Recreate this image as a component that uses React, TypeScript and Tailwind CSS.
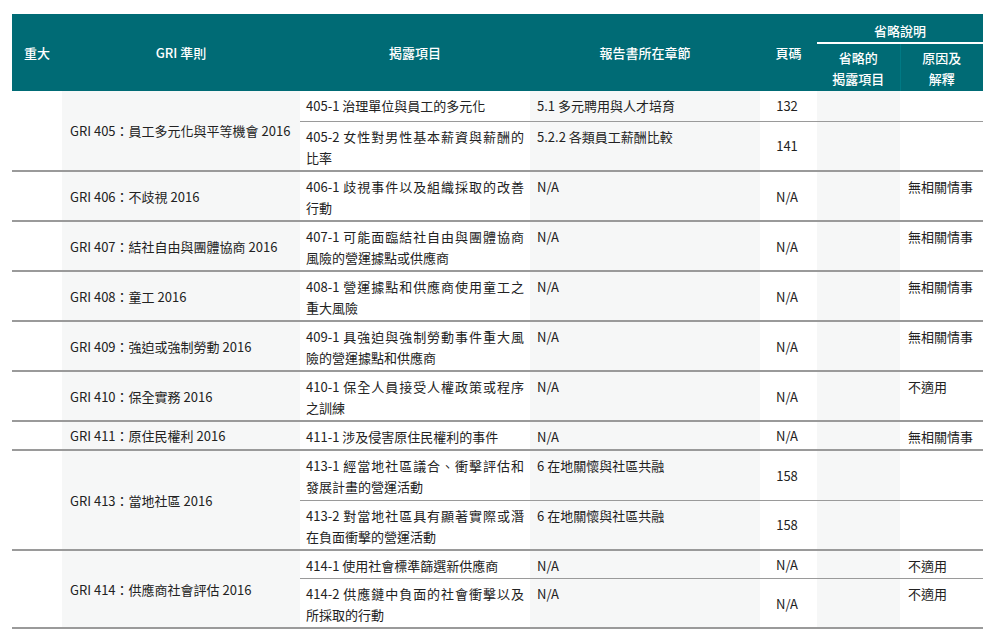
import React from "react";

type Sub = { d: string; s: string; p: string; o?: string };
type Row = { g: string; subs: Sub[]; h: number[] };

const rows: Row[] = [
  { g: "GRI 405：員工多元化與平等機會 2016", h: [30, 50], subs: [
    { d: "405-1 治理單位與員工的多元化", s: "5.1 多元聘用與人才培育", p: "132" },
    { d: "405-2 女性對男性基本薪資與薪酬的比率", s: "5.2.2 各類員工薪酬比較", p: "141" }] },
  { g: "GRI 406：不歧視 2016", h: [50], subs: [{ d: "406-1 歧視事件以及組織採取的改善行動", s: "N/A", p: "N/A", o: "無相關情事" }] },
  { g: "GRI 407：結社自由與團體協商 2016", h: [50], subs: [{ d: "407-1 可能面臨結社自由與團體協商風險的營運據點或供應商", s: "N/A", p: "N/A", o: "無相關情事" }] },
  { g: "GRI 408：童工 2016", h: [50], subs: [{ d: "408-1 營運據點和供應商使用童工之重大風險", s: "N/A", p: "N/A", o: "無相關情事" }] },
  { g: "GRI 409：強迫或強制勞動 2016", h: [50], subs: [{ d: "409-1 具強迫與強制勞動事件重大風險的營運據點和供應商", s: "N/A", p: "N/A", o: "無相關情事" }] },
  { g: "GRI 410：保全實務 2016", h: [49], subs: [{ d: "410-1 保全人員接受人權政策或程序之訓練", s: "N/A", p: "N/A", o: "不適用" }] },
  { g: "GRI 411：原住民權利 2016", h: [28], subs: [{ d: "411-1 涉及侵害原住民權利的事件", s: "N/A", p: "N/A", o: "無相關情事" }] },
  { g: "GRI 413：當地社區 2016", h: [50, 50], subs: [
    { d: "413-1 經當地社區議合、衝擊評估和發展計畫的營運活動", s: "6 在地關懷與社區共融", p: "158" },
    { d: "413-2 對當地社區具有顯著實際或潛在負面衝擊的營運活動", s: "6 在地關懷與社區共融", p: "158" }] },
  { g: "GRI 414：供應商社會評估 2016", h: [28, 49], subs: [
    { d: "414-1 使用社會標準篩選新供應商", s: "N/A", p: "N/A", o: "不適用" },
    { d: "414-2 供應鏈中負面的社會衝擊以及所採取的行動", s: "N/A", p: "N/A", o: "不適用" }] },
];

const shade = "bg-[#f6f7f7]";

export default function App() {
  return (
    <div className="bg-white w-[997px] h-[635px] pt-[14px] pl-[12px]" style={{ fontFamily: '"Noto Sans CJK TC", "Noto Sans", sans-serif' }}>
      <table className="border-collapse text-[13px] leading-[21px] text-[#222] table-fixed w-[971px]">
        <colgroup>
          <col className="w-[50px]" /><col className="w-[238px]" /><col className="w-[230px]" /><col className="w-[230px]" />
          <col className="w-[57px]" /><col className="w-[83px]" /><col className="w-[83px]" />
        </colgroup>
        <thead className="bg-[#006b75] text-white font-medium">
          <tr className="h-[29px]">
            <th rowSpan={2} className="text-left pl-[12px] font-medium align-middle">重大</th>
            <th rowSpan={2} className="font-medium">GRI 準則</th>
            <th rowSpan={2} className="font-medium">揭露項目</th>
            <th rowSpan={2} className="font-medium">報告書所在章節</th>
            <th rowSpan={2} className="font-medium">頁碼</th>
            <th colSpan={2} className="font-medium border-b-2 border-white pt-1">省略說明</th>
          </tr>
          <tr className="h-[48px]">
            <th className="font-medium border-r border-[#007a85]">省略的<br />揭露項目</th>
            <th className="font-medium">原因及<br />解釋</th>
          </tr>
        </thead>
        <tbody>
          {rows.map((r, i) =>
            r.subs.map((s, j) => (
              <tr key={i + "-" + j} style={{ height: r.h[j] }}
                className={j === r.subs.length - 1 ? "border-b-2 border-[#9a9a9a]" : ""}>
                {j === 0 && <td rowSpan={r.subs.length} className="bg-white" />}
                {j === 0 && <td rowSpan={r.subs.length} className={`${shade} pl-[8px] pr-[4px] align-middle text-justify`}>{r.g}</td>}
                <td className={`align-top px-[6px] pt-[4px] pb-[2px] text-justify ${j < r.subs.length - 1 ? "border-b border-[#9a9a9a]" : ""}`}>{s.d}</td>
                <td className={`${shade} align-top px-[7px] pt-[4px] ${j < r.subs.length - 1 ? "border-b border-[#9a9a9a]" : ""}`}>{s.s}</td>
                <td className={`align-middle text-center pr-[3px] ${j < r.subs.length - 1 ? "border-b border-[#9a9a9a]" : ""}`}>{s.p}</td>
                <td className={`${shade} ${j < r.subs.length - 1 ? "border-b border-[#9a9a9a]" : ""}`} />
                <td className={`align-top pl-[8px] pt-[4px] ${j < r.subs.length - 1 ? "border-b border-[#9a9a9a]" : ""}`}>{s.o ?? ""}</td>
              </tr>
            ))
          )}
        </tbody>
      </table>
    </div>
  );
}
